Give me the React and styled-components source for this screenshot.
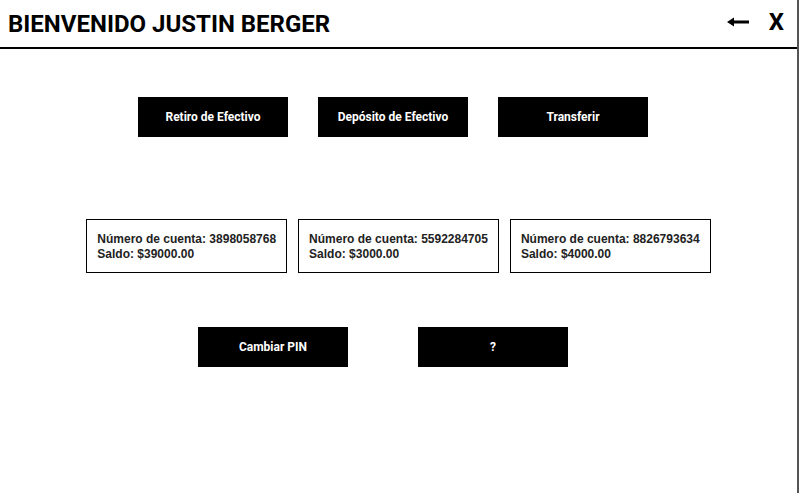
import styled, { createGlobalStyle } from "styled-components";

const Global = createGlobalStyle`
  body {
    margin: 0;
    background: #fff;
  }
`;

const Page = styled.div`
  width: 797px;
  height: 493px;
  border-right: 2px solid #555;
  font-family: Roboto, "Liberation Sans", sans-serif;
`;

const Header = styled.div`
  display: flex;
  justify-content: space-between;
  align-items: center;
  height: 47px;
  padding: 0 13px 0 8px;
  border-bottom: 2px solid #000;
  h1 {
    margin: 0;
    font-size: 24px;
    font-weight: 700;
    color: #000;
  }
`;

const Controls = styled.div`
  display: flex;
  align-items: center;
  gap: 20px;
  margin-top: -4px;
  button {
    background: none;
    border: none;
    padding: 0;
    cursor: pointer;
    display: flex;
    align-items: center;
  }
  .close {
    font-family: Roboto, sans-serif;
    font-size: 24px;
    font-weight: 700;
    color: #000;
  }
`;

const Row = styled.div`
  display: flex;
  justify-content: center;
  gap: ${(p) => p.gap}px;
  margin-top: ${(p) => p.top}px;
  padding-right: ${(p) => p.shift || 0}px;
`;

const ActionButton = styled.button`
  width: 150px;
  height: 40px;
  background: #000;
  color: #fff;
  border: none;
  font-family: Roboto, sans-serif;
  font-size: 12px;
  font-weight: 700;
  cursor: pointer;
`;

const Card = styled.div`
  border: 1px solid #000;
  padding: 12px 10px 10px;
  font-family: "Liberation Sans", Arial, sans-serif;
  font-size: 12px;
  font-weight: 700;
  line-height: 15px;
  color: #222;
  white-space: nowrap;
`;

const cuentas = [
  { numero: "3898058768", saldo: "39000.00" },
  { numero: "5592284705", saldo: "3000.00" },
  { numero: "8826793634", saldo: "4000.00" },
];

const App = () => {
  return (
    <Page>
      <Global />
      <Header>
        <h1>BIENVENIDO JUSTIN BERGER</h1>
        <Controls>
          <button aria-label="volver">
            <svg width="22" height="10" viewBox="0 0 22 10">
              <path d="M0 5 L7 0.5 L7 3.5 L22 3.5 L22 6.5 L7 6.5 L7 9.5 Z" fill="#000" />
            </svg>
          </button>
          <button className="close">X</button>
        </Controls>
      </Header>

      <Row gap={30} top={48} shift={11}>
        <ActionButton>Retiro de Efectivo</ActionButton>
        <ActionButton>Depósito de Efectivo</ActionButton>
        <ActionButton>Transferir</ActionButton>
      </Row>

      <Row gap={11} top={82}>
        {cuentas.map((c) => (
          <Card key={c.numero}>
            <div>Número de cuenta: {c.numero}</div>
            <div>Saldo: ${c.saldo}</div>
          </Card>
        ))}
      </Row>

      <Row gap={70} top={54} shift={31}>
        <ActionButton>Cambiar PIN</ActionButton>
        <ActionButton>?</ActionButton>
      </Row>
    </Page>
  );
};

export default App;
